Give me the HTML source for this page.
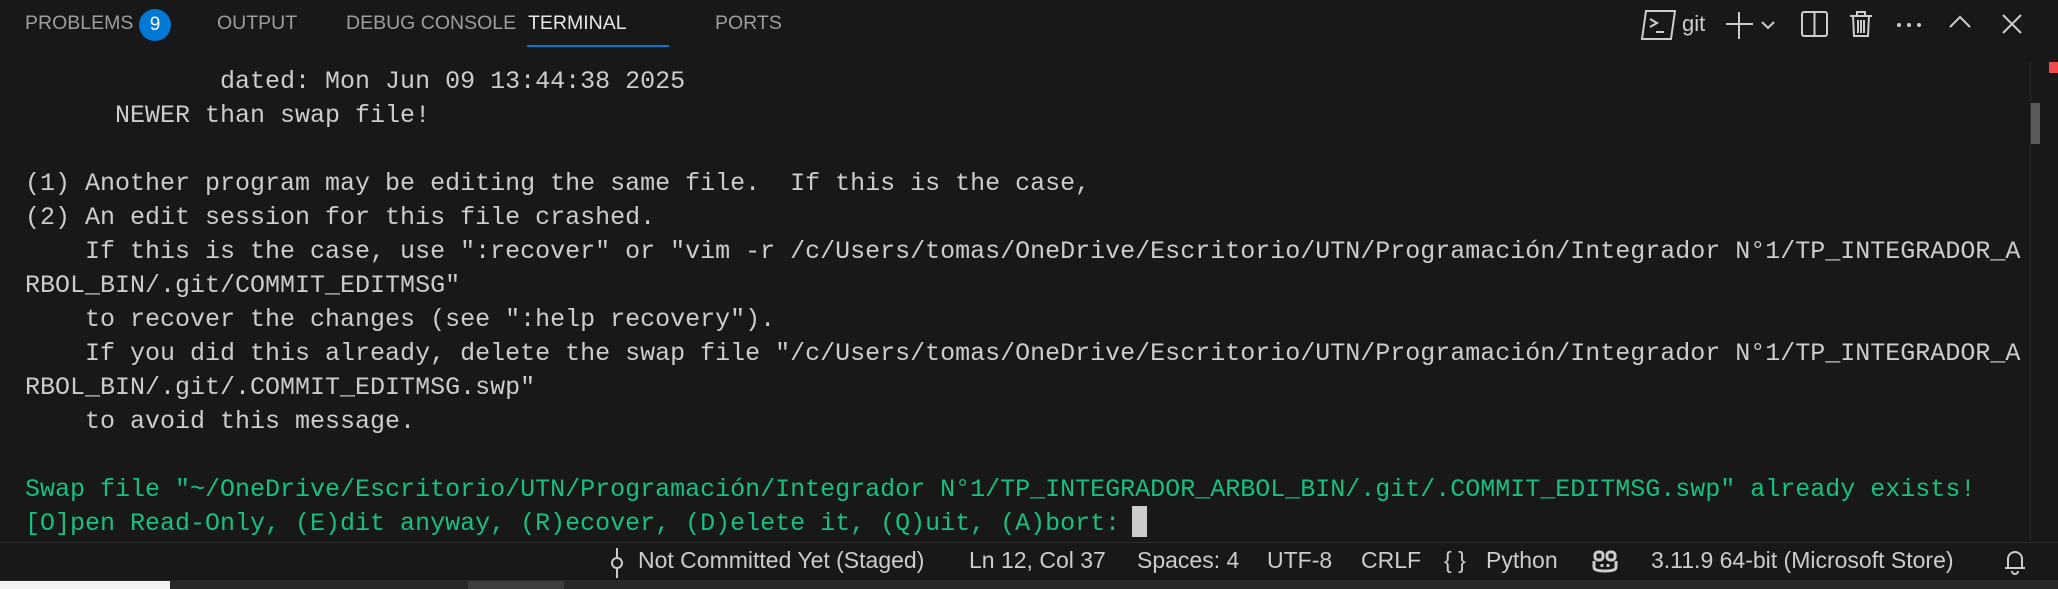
<!DOCTYPE html>
<html><head><meta charset="utf-8"><style>
*{margin:0;padding:0;box-sizing:border-box}
body{width:2058px;height:589px;background:#181818;overflow:hidden;position:relative;font-family:"Liberation Sans",sans-serif}
.tab{position:absolute;top:12px;font-size:19.5px;color:#9d9d9d;white-space:nowrap}
.term{position:absolute;left:25px;top:65px;font-family:"Liberation Mono",monospace;font-size:25px;line-height:34px;color:#cccccc;white-space:pre}
.g{color:#18c07f}
.sb{position:absolute;top:547px;font-size:23px;color:#cccccc;white-space:nowrap;transform-origin:left center}
svg{position:absolute}
</style></head><body>
<div class="tab" style="left:25px">PROBLEMS</div>
<div style="position:absolute;left:139px;top:9px;width:32px;height:32px;border-radius:16px;background:#0078d4;color:#fff;font-size:19px;text-align:center;line-height:32px">9</div>
<div class="tab" style="left:217px">OUTPUT</div>
<div class="tab" style="left:346px">DEBUG CONSOLE</div>
<div class="tab" style="left:528px;color:#e7e7e7">TERMINAL</div>
<div style="position:absolute;left:527px;top:45px;width:142px;height:2px;background:#0078d4"></div>
<div class="tab" style="left:715px">PORTS</div>

<svg style="left:1640px;top:8px" width="40" height="34" viewBox="0 0 40 34" fill="none" stroke="#cccccc" stroke-width="2"><path d="M6 3H35L31 31H2Z"/><path d="M10 11l7 4-7 4M16 24h8"/></svg>
<div style="position:absolute;left:1682px;top:11px;font-size:22px;color:#cccccc">git</div>
<svg style="left:1724px;top:10px" width="60" height="30" fill="none" stroke="#cccccc" stroke-width="2"><path d="M15 2v27M2 14h27M38 12l6 6 6-6"/></svg>
<svg style="left:1800px;top:10px" width="30" height="28" fill="none" stroke="#cccccc" stroke-width="2"><rect x="2" y="2" width="25" height="24" rx="2"/><path d="M14.5 2v24"/></svg>
<svg style="left:1848px;top:10px" width="26" height="28" fill="none" stroke="#cccccc" stroke-width="2"><path d="M2 6h22M9 6V2h8v4M5 6l1 20h14l1-20M10 10v13M13 10v13M16 10v13"/></svg>
<svg style="left:1895px;top:20px" width="30" height="10" fill="#cccccc"><circle cx="4" cy="5" r="2"/><circle cx="14" cy="5" r="2"/><circle cx="24" cy="5" r="2"/></svg>
<svg style="left:1948px;top:14px" width="24" height="16" fill="none" stroke="#cccccc" stroke-width="2"><path d="M2 13L12 3l10 10"/></svg>
<svg style="left:2001px;top:13px" width="22" height="22" fill="none" stroke="#cccccc" stroke-width="2"><path d="M2 2l18 18M20 2L2 20"/></svg>

<div style="position:absolute;left:2030px;top:62px;width:1px;height:480px;background:#2b2b2b"></div>
<div style="position:absolute;left:2049px;top:62px;width:9px;height:11px;background:#f14c4c"></div>
<div style="position:absolute;left:2031px;top:103px;width:9px;height:41px;background:#5a5a5a"></div>

<div class="term">             dated: Mon Jun 09 13:44:38 2025
      NEWER than swap file!

(1) Another program may be editing the same file.  If this is the case,
(2) An edit session for this file crashed.
    If this is the case, use ":recover" or "vim -r /c/Users/tomas/OneDrive/Escritorio/UTN/Programación/Integrador N°1/TP_INTEGRADOR_A
RBOL_BIN/.git/COMMIT_EDITMSG"
    to recover the changes (see ":help recovery").
    If you did this already, delete the swap file "/c/Users/tomas/OneDrive/Escritorio/UTN/Programación/Integrador N°1/TP_INTEGRADOR_A
RBOL_BIN/.git/.COMMIT_EDITMSG.swp"
    to avoid this message.

<span class="g">Swap file "~/OneDrive/Escritorio/UTN/Programación/Integrador N°1/TP_INTEGRADOR_ARBOL_BIN/.git/.COMMIT_EDITMSG.swp" already exists!
[O]pen Read-Only, (E)dit anyway, (R)ecover, (D)elete it, (Q)uit, (A)bort: </span></div>
<div style="position:absolute;left:1132px;top:506px;width:15px;height:31px;background:#cccccc"></div>

<div style="position:absolute;left:0;top:542px;width:2058px;height:1px;background:#2b2b2b"></div>
<svg style="left:610px;top:548px" width="14" height="30" fill="none" stroke="#cccccc" stroke-width="2"><path d="M7 0v9M7 21v9"/><circle cx="7" cy="15" r="5"/></svg>
<div class="sb" style="left:638px;transform:scaleX(1.0)">Not Committed Yet (Staged)</div>
<div class="sb" style="left:969px">Ln 12, Col 37</div>
<div class="sb" style="left:1137px">Spaces: 4</div>
<div class="sb" style="left:1267px">UTF-8</div>
<div class="sb" style="left:1361px">CRLF</div>
<div class="sb" style="left:1444px">{ }</div>
<div class="sb" style="left:1486px">Python</div>
<svg style="left:1592px;top:549px" width="26" height="24" fill="none" stroke="#cccccc" stroke-width="3"><rect x="3" y="3" width="8" height="8" rx="3"/><rect x="15" y="3" width="8" height="8" rx="3"/><path d="M2 12v6c0 3 4 4 11 4s11-1 11-4v-6"/><path d="M10 15v3M16 15v3"/></svg>
<div class="sb" style="left:1651px">3.11.9 64-bit (Microsoft Store)</div>
<svg style="left:2004px;top:549px" width="22" height="26" fill="none" stroke="#cccccc" stroke-width="2"><path d="M4 19V10a7 7 0 0 1 14 0v9M1 19h20M8 22a3 3 0 0 0 6 0"/></svg>

<div style="position:absolute;left:0;top:580px;width:2058px;height:9px;background:#2a2826"></div>
<div style="position:absolute;left:0;top:581px;width:170px;height:8px;background:#f3f3f3"></div>
<div style="position:absolute;left:468px;top:581px;width:96px;height:8px;background:#3e3e3c"></div>
</body></html>
